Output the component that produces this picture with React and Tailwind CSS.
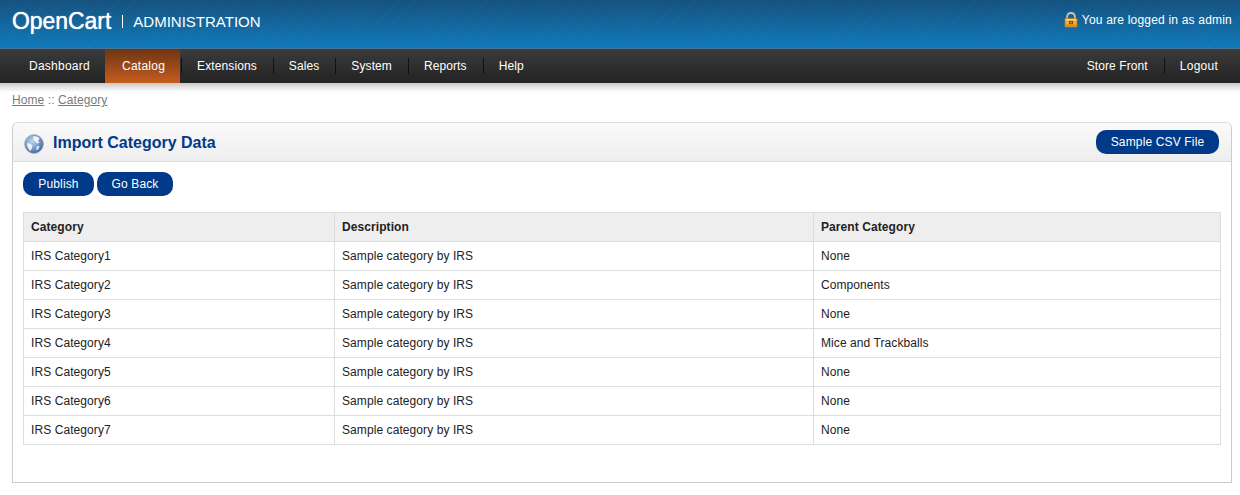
import React from 'react';

const menuLeft = ['Extensions', 'Sales', 'System', 'Reports'];

const rows = [
  ['IRS Category1', 'Sample category by IRS', 'None'],
  ['IRS Category2', 'Sample category by IRS', 'Components'],
  ['IRS Category3', 'Sample category by IRS', 'None'],
  ['IRS Category4', 'Sample category by IRS', 'Mice and Trackballs'],
  ['IRS Category5', 'Sample category by IRS', 'None'],
  ['IRS Category6', 'Sample category by IRS', 'None'],
  ['IRS Category7', 'Sample category by IRS', 'None'],
];

function LockIcon() {
  return (
    <svg width="14" height="16" viewBox="0 0 14 16" className="mr-1 shrink-0">
      <path d="M3.2 7V4.6C3.2 2.5 4.8 1 7 1s3.800 1.500 3.800 3.600V7" fill="none" stroke="#c3c5c4" strokeWidth="1.800" />
      <rect x="1" y="6.500" width="12" height="8.500" rx="0.500" fill="#f0ae2e" stroke="#b5791a" strokeWidth="0.800" />
      <rect x="1.500" y="7" width="11" height="1.500" fill="#f9d77a" />
      <rect x="1.500" y="12.500" width="11" height="2" fill="#d58f1f" />
      <rect x="5" y="8.800" width="4" height="3.400" fill="#6b4a12" />
      <rect x="6.300" y="9.600" width="1.400" height="1.800" fill="#f0ae2e" />
    </svg>
  );
}

function GlobeIcon() {
  return (
    <svg width="20" height="20" viewBox="0 0 20 20" className="mt-[3px] shrink-0">
      <defs>
        <radialGradient id="globe" cx="40%" cy="35%" r="70%">
          <stop offset="0%" stopColor="#c2d6ee" />
          <stop offset="60%" stopColor="#6f96c6" />
          <stop offset="100%" stopColor="#3a6299" />
        </radialGradient>
      </defs>
      <circle cx="10" cy="10" r="9.300" fill="url(#globe)" stroke="#8b9bb0" strokeWidth="0.800" />
      <path d="M9 2.500c2.500-.5 5 .3 6.500 2L14 7l1.500 1.800L13 9.500l-1.500-2L9.500 6z" fill="#f2f5f8" />
      <path d="M3 9l3 .5 2.500 2L8 14l-1.500 3C4.500 15.500 3 12.500 3 9z" fill="#eef2f6" />
      <path d="M12.500 12.500l3-.5-1 3-2 1.500z" fill="#e6ecf2" />
    </svg>
  );
}

function BlueButton({ children, className = '' }) {
  return (
    <a className={`inline-block h-6 rounded-[10px] bg-[#003a88] text-center text-xs leading-6 tracking-[0.15px] text-white ${className}`}>
      {children}
    </a>
  );
}

function NavSeparator() {
  return <span className="h-[16px] w-px bg-[#111]" />;
}

function App() {
  return (
    <div className="h-[495px] w-full overflow-hidden bg-white font-['Liberation_Sans',Arial,sans-serif] text-xs text-[#222]">
      <div className="flex h-[48px] items-center justify-between bg-[#0f6aa6] bg-[image:repeating-linear-gradient(135deg,rgba(255,255,255,0.03)_0,rgba(255,255,255,0.03)_1px,transparent_1px,transparent_3px),linear-gradient(to_bottom,#14517f,#0f79b9)] pl-3 pr-2">
        <div className="mb-[6px] flex items-center text-white">
          <span className="text-[23px] leading-none tracking-[-0.05px] [text-shadow:0_0_1px_#fff]">OpenCart</span>
          <span className="ml-[11px] mr-[10px] h-[13px] w-px bg-white" />
          <span className="text-[15px] leading-none">ADMINISTRATION</span>
        </div>
        <div className="mb-[8px] flex items-center tracking-[0.2px] text-white">
          <LockIcon />
          <span>You are logged in as admin</span>
        </div>
      </div>

      <div className="flex h-[35px] items-stretch justify-between border-t border-t-[#4a7396] bg-[linear-gradient(to_bottom,#3b3b3b,#232323)] pl-[13px] pr-[22px] tracking-[0.25px] text-white">
        <ul className="flex items-stretch">
          <li className="flex items-center pl-[16px] pr-[15px]">Dashboard</li>
          <li className="mr-px flex items-center bg-[linear-gradient(to_bottom,#6d3512,#c65c20)] pl-[17px] pr-[15px]">Catalog</li>
          <li className="flex items-center">
            <NavSeparator />
          </li>
          {menuLeft.map((item) => (
            <li key={item} className="flex items-center tracking-[0.1px]">
              <span className="pl-[15px] pr-[16px]">{item}</span>
              <NavSeparator />
            </li>
          ))}
          <li className="flex items-center pl-[15px] tracking-[0.1px]">Help</li>
        </ul>
        <ul className="flex items-stretch">
          <li className="flex items-center tracking-[0.1px]">
            <span className="pr-[16px]">Store Front</span>
            <NavSeparator />
          </li>
          <li className="flex items-center pl-[15px]">Logout</li>
        </ul>
      </div>

      <div className="h-[9px] bg-[linear-gradient(to_bottom,#c9c9c9,#ffffff)]" />

      <div className="h-[30px] pl-3 pt-[1px] leading-[15px] tracking-[0.08px] text-[#7a7a7a]">
        <a className="underline">Home</a> :: <a className="underline">Category</a>
      </div>

      <div className="ml-3 mr-2 h-[361px] rounded-t-[6px] border border-[#ccc] border-t-[#ddd]">
        <div className="flex h-[39px] items-center justify-between rounded-t-[6px] border-b border-[#ddd] bg-[linear-gradient(to_bottom,#fafafa,#eeeeee)] pl-[11px] pr-[12px]">
          <div className="flex items-center">
            <GlobeIcon />
            <h1 className="ml-[9px] mt-px text-base font-bold text-[#003a88]">Import Category Data</h1>
          </div>
          <BlueButton className="w-[123px]">Sample CSV File</BlueButton>
        </div>

        <div className="px-[10px] pt-[10px]">
          <div className="flex gap-[3px]">
            <BlueButton className="w-[71px]">Publish</BlueButton>
            <BlueButton className="w-[76px]">Go Back</BlueButton>
          </div>

          <table className="mt-[16px] w-[1197px] table-fixed border-collapse border border-[#ddd] tracking-[0.08px]">
            <colgroup>
              <col className="w-[311px]" />
              <col className="w-[479px]" />
              <col className="w-[407px]" />
            </colgroup>
            <thead>
              <tr className="h-[29px] bg-[#eeeeee]">
                <th className="border border-[#ddd] pl-[7px] text-left font-bold">Category</th>
                <th className="border border-[#ddd] pl-[7px] text-left font-bold">Description</th>
                <th className="border border-[#ddd] pl-[7px] text-left font-bold">Parent Category</th>
              </tr>
            </thead>
            <tbody>
              {rows.map((row) => (
                <tr key={row[0]} className="h-[29px]">
                  {row.map((cell, i) => (
                    <td key={i} className="border border-[#ddd] pl-[7px]">{cell}</td>
                  ))}
                </tr>
              ))}
            </tbody>
          </table>
        </div>
      </div>
    </div>
  );
}

export default App;
